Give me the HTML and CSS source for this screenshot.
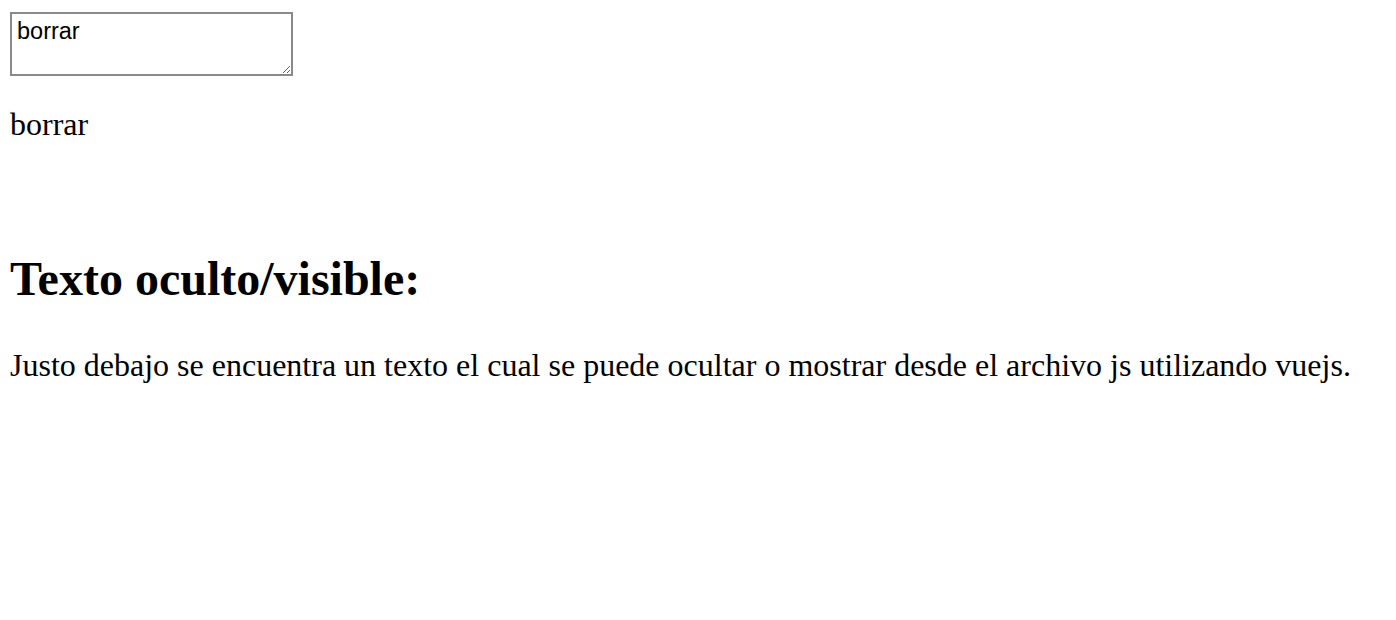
FILE: index.html
```html
<!DOCTYPE html>
<html lang="es">
<head>
<meta charset="utf-8">
<title>Vue</title>
<link rel="stylesheet" href="styles.css">
</head>
<body>
<div class="app">
  <textarea class="entrada">borrar</textarea>
  <p class="eco">borrar</p>
  <h2 class="titulo">Texto oculto/visible:</h2>
  <p class="texto">Justo debajo se encuentra un texto el cual se puede ocultar o mostrar desde el archivo js utilizando vuejs.</p>
</div>
</body>
</html>
```
FILE: styles.css
```css
html, body {
  background: #ffffff;
}
body {
  margin: 10px;
  font-family: "Liberation Serif", "Times New Roman", serif;
  font-size: 32px;
  color: #000;
}
.entrada {
  display: block;
  box-sizing: border-box;
  width: 283px;
  height: 64px;
  margin: 2px 0 0 0;
  padding: 4px 5px;
  border: 2px solid #8a8a8a;
  font-family: "Liberation Sans", Arial, sans-serif;
  font-size: 23.5px;
  line-height: 1.15;
  color: #000;
  background: #fff;
  resize: both;
}
.eco {
  margin: 30px 0 0 0;
}
.titulo {
  font-size: 48px;
  font-weight: bold;
  margin: 108px 0 0 0;
}
.texto {
  margin: 41px 0 0 0;
}
```
